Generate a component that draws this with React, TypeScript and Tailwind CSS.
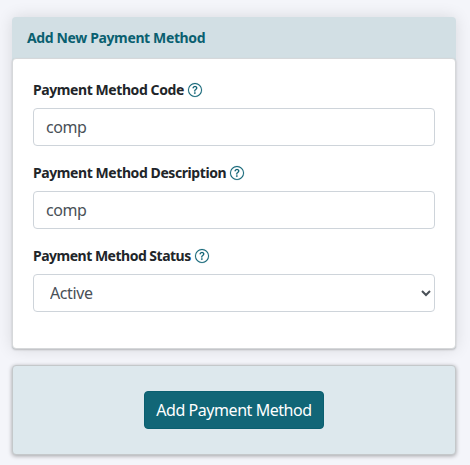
import type { ReactNode } from 'react'
import { BsQuestionCircle } from 'react-icons/bs'

const control =
  'block w-full h-[38px] rounded-[4px] border border-[#ced4da] bg-white text-[16px] tracking-[-0.4px] text-[#495057] outline-none'

type FieldProps = {
  id: string
  label: string
  labelClass: string
  children: ReactNode
}

function Field({ id, label, labelClass, children }: FieldProps) {
  return (
    <div className="mb-4">
      <div className="flex items-center h-[21px] mb-2">
        <label htmlFor={id} className={`${labelClass} text-[14px] font-bold whitespace-nowrap text-[#212529]`}>
          {label}
        </label>
        <BsQuestionCircle
          size={14}
          strokeWidth={0.2}
          className="ml-1 shrink-0 overflow-visible text-[#0f6375]"
        />
      </div>
      {children}
    </div>
  )
}

export default function App() {
  return (
    <div className="h-[465px] overflow-hidden bg-[#f4f5fa] pt-[17px] pl-3 pr-[14px] font-['Noto_Sans','Open_Sans',sans-serif]">
      <div className="rounded-[4px] bg-[#d2dfe4] shadow-[0_0_16px_rgba(0,0,0,0.12)]">
        <h2 className="flex items-center h-[41px] px-[15px] text-[14px] font-bold tracking-[-0.37px] text-[#0a5f70]">
          Add New Payment Method
        </h2>
        <div className="h-[291px] rounded-[4px] border border-[#d6d8da] bg-white px-5 pt-[20px] shadow-[0_1px_2px_rgba(0,0,0,0.2)]">
          <Field id="code" label="Payment Method Code" labelClass="w-[151px] tracking-[-0.42px]">
            <input id="code" type="text" defaultValue="comp" className={`${control} px-3`} />
          </Field>
          <Field id="description" label="Payment Method Description" labelClass="w-[193px] tracking-[-0.42px]">
            <input id="description" type="text" defaultValue="comp" className={`${control} px-3`} />
          </Field>
          <Field id="status" label="Payment Method Status" labelClass="w-[158px] tracking-[-0.5px]">
            <select id="status" className={`${control} pl-3`}>
              <option>Active</option>
              <option>Inactive</option>
            </select>
          </Field>
        </div>
      </div>

      <div className="mt-4 flex items-center justify-center h-[90px] rounded-[4px] border border-[#c4c8ca] bg-[#dde8ed] shadow-[0_1px_4px_rgba(0,0,0,0.35)]">
        <button
          type="button"
          className="w-[180px] h-[38px] rounded-[4px] border border-[#0a5f70] bg-[#116677] text-[16px] tracking-[-0.45px] whitespace-nowrap text-white"
        >
          Add Payment Method
        </button>
      </div>
    </div>
  )
}
